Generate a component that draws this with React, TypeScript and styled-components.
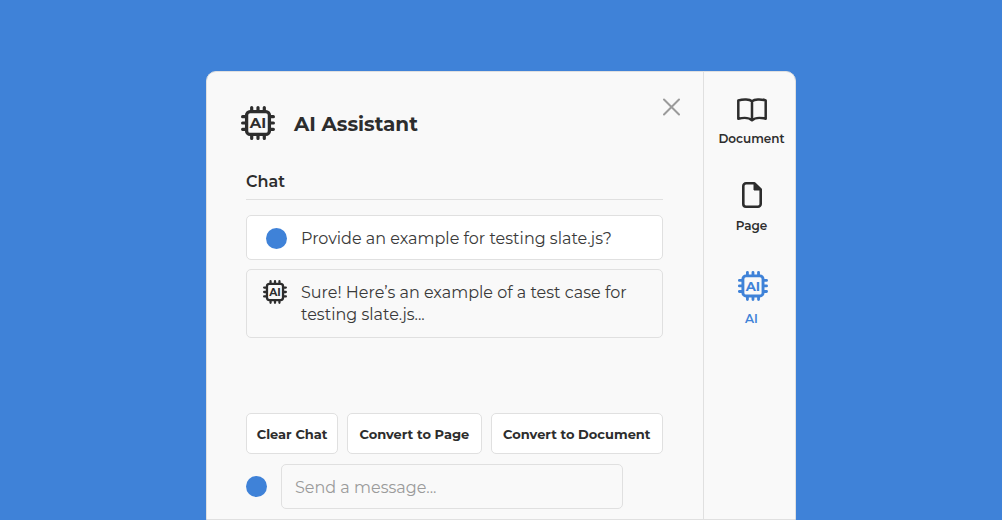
import React from "react";
import styled, { createGlobalStyle } from "styled-components";

const blue = "#3f82d8";
const ink = "#2d2d2d";
const line = "#e0e0e0";
const surface = "#f9f9f9";

const GlobalStyle = createGlobalStyle`
  *, *::before, *::after { box-sizing: border-box; }
  body {
    margin: 0;
    background: ${blue};
    color: ${ink};
    font-family: Montserrat, Inter, "Open Sans", sans-serif;
  }
  button, input { font: inherit; color: inherit; }
  h1, h2, p { margin: 0; }
`;

const Page = styled.div`
  padding-top: 71px;
`;

const Panel = styled.div`
  display: flex;
  width: 100%;
  max-width: 590px;
  margin: 0 auto;
  background: ${surface};
  border: 1px solid ${line};
  border-radius: 10px 10px 0 0;
`;

const Main = styled.main`
  flex: 1;
  min-width: 0;
`;

const Header = styled.header`
  display: flex;
  align-items: flex-start;
  justify-content: space-between;
  padding: 26px 23px 0 34px;
`;

const Brand = styled.div`
  display: flex;
  align-items: flex-start;
  gap: 19px;
  padding-top: 8px;
`;

const Title = styled.h1`
  font-size: 20px;
  line-height: 36px;
  font-weight: 700;
`;

const CloseButton = styled.button`
  display: flex;
  padding: 0;
  border: 0;
  background: none;
  color: #9b9b9b;
  cursor: pointer;
`;

const Content = styled.section`
  padding: 29px 40px 10px 39px;
`;

const SectionTitle = styled.h2`
  padding-bottom: 6px;
  margin-bottom: 15px;
  border-bottom: 1px solid ${line};
  font-size: 16px;
  line-height: 22px;
  font-weight: 600;
`;

const Messages = styled.div`
  display: flex;
  flex-direction: column;
  gap: 9px;
`;

const Message = styled.div<{ $own?: boolean }>`
  display: flex;
  gap: 14px;
  padding: ${(p) => (p.$own ? "12px 16px 9px" : "12px 16px 11px")};
  border: 1px solid ${line};
  border-radius: 5px;
  background: ${(p) => (p.$own ? "#ffffff" : surface)};
`;

const Lead = styled.span`
  display: flex;
  flex: none;
  align-items: center;
  justify-content: flex-end;
  width: 24px;
  height: 20px;
`;

const Avatar = styled.span`
  flex: none;
  align-self: center;
  width: 21px;
  height: 21px;
  border-radius: 50%;
  background: ${blue};
`;

const MessageText = styled.p`
  font-size: 16px;
  line-height: 22px;
  font-weight: 400;
  color: #3a3a3a;
`;

const Actions = styled.div`
  display: grid;
  grid-template-columns: 92fr 134fr 172fr;
  gap: 9px;
  margin-top: 75px;
`;

const ActionButton = styled.button`
  height: 41px;
  padding: 0;
  border: 1px solid ${line};
  border-radius: 5px;
  background: #ffffff;
  font-size: 13px;
  font-weight: 700;
  white-space: nowrap;
  cursor: pointer;
`;

const Composer = styled.form`
  display: flex;
  gap: 14px;
  margin-top: 10px;
  padding-right: 40px;
`;

const MessageInput = styled.input`
  flex: 1;
  min-width: 0;
  height: 45px;
  padding: 2px 13px 0;
  border: 1px solid ${line};
  border-radius: 5px;
  background: ${surface};
  font-size: 16px;
  &::placeholder { color: #9b9b9b; opacity: 1; }
`;

const Rail = styled.nav`
  display: flex;
  flex: none;
  flex-direction: column;
  align-items: center;
  gap: 35px;
  width: 92px;
  padding: 25px 0 0 4px;
  border-left: 1px solid ${line};
`;

const RailButton = styled.button<{ $active?: boolean }>`
  display: flex;
  flex-direction: column;
  align-items: center;
  gap: 9px;
  padding: 0;
  border: 0;
  background: none;
  color: ${(p) => (p.$active ? blue : ink)};
  font-size: 12px;
  line-height: 16px;
  font-weight: 600;
  cursor: pointer;
`;

const Chip = styled.svg`
  display: block;
  flex: none;
  text {
    font-size: 15px;
    font-weight: 700;
  }
`;

type ChipIconProps = { width: number; height: number; box?: string };

function ChipIcon({ width, height, box = "0 0 34 34" }: ChipIconProps) {
  return (
    <Chip width={width} height={height} viewBox={box} aria-hidden="true">
      <rect x="5.6" y="5.6" width="22.8" height="22.8" rx="3.5" fill="none" stroke="currentColor" strokeWidth="3.3" />
      <path
        d="M10.7 1.6V5M17 1.6V5M23.3 1.6V5M10.7 29v3.4M17 29v3.4M23.3 29v3.4M1.6 10.7H5M1.6 17H5M1.6 23.3H5M29 10.7h3.4M29 17h3.4M29 23.3h3.4"
        stroke="currentColor"
        strokeWidth="3.2"
        strokeLinecap="round"
      />
      <text x="17" y="22.4" textAnchor="middle" fill="currentColor">AI</text>
    </Chip>
  );
}

function BookIcon() {
  return (
    <svg width="32" height="25" viewBox="-2 -1 32 25" fill="none" stroke="currentColor" strokeWidth="2.5" strokeLinejoin="round" aria-hidden="true">
      <path d="M15 3.2C12.500 1.200 6.500.8 1.300 2.500v18.200c5.200-1.200 10.700-1.200 13.700 1.500 3-2.700 8.500-2.700 13.700-1.500V2.500C23.500.8 17.500 1.200 15 3.200zV22" />
    </svg>
  );
}

function PageIcon() {
  return (
    <svg width="20" height="27" viewBox="0 0 20 27" aria-hidden="true">
      <path d="M4 1.300h8.500L18.700 7.500V22a2.700 2.700 0 0 1-2.700 2.700H4A2.700 2.700 0 0 1 1.300 22V4A2.700 2.700 0 0 1 4 1.300z" fill="none" stroke="currentColor" strokeWidth="2.6" strokeLinejoin="round" />
      <path d="M12 1v7h7z" fill="currentColor" stroke="currentColor" strokeLinejoin="round" />
    </svg>
  );
}

function CloseIcon() {
  return (
    <svg width="17" height="18" viewBox="0 0 17 18" fill="none" stroke="currentColor" strokeWidth="2" strokeLinecap="round" aria-hidden="true">
      <path d="M1 1.500l15 15M16 1.500L1 16.500" />
    </svg>
  );
}

export default function App() {
  return (
    <Page>
      <GlobalStyle />
      <Panel>
        <Main>
          <Header>
            <Brand>
              <ChipIcon width={34} height={34} />
              <Title>AI Assistant</Title>
            </Brand>
            <CloseButton type="button" aria-label="Close">
              <CloseIcon />
            </CloseButton>
          </Header>
          <Content>
            <SectionTitle>Chat</SectionTitle>
            <Messages>
              <Message $own>
                <Lead><Avatar /></Lead>
                <MessageText>Provide an example for testing slate.js?</MessageText>
              </Message>
              <Message>
                <Lead><ChipIcon width={24} height={24} /></Lead>
                <MessageText>Sure! Here’s an example of a test case for testing slate.js...</MessageText>
              </Message>
            </Messages>
            <Actions>
              <ActionButton type="button">Clear Chat</ActionButton>
              <ActionButton type="button">Convert to Page</ActionButton>
              <ActionButton type="button">Convert to Document</ActionButton>
            </Actions>
            <Composer onSubmit={(e) => e.preventDefault()}>
              <Avatar />
              <MessageInput type="text" aria-label="Message" placeholder="Send a message..." />
            </Composer>
          </Content>
        </Main>
        <Rail aria-label="Tools">
          <RailButton type="button">
            <BookIcon />
            Document
          </RailButton>
          <RailButton type="button">
            <PageIcon />
            Page
          </RailButton>
          <RailButton type="button" $active aria-current="true">
            <ChipIcon width={32} height={33} box="-2.2 -2.2 36.2 37.4" />
            AI
          </RailButton>
        </Rail>
      </Panel>
    </Page>
  );
}
